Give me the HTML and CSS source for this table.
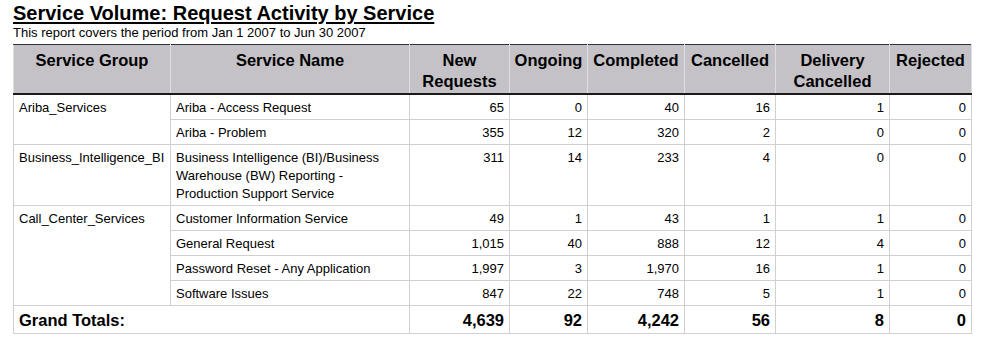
FILE: index.html
```html
<!DOCTYPE html>
<html lang="en">
<head>
<meta charset="utf-8">
<title>Service Volume: Request Activity by Service</title>
<link rel="stylesheet" href="styles.css">
</head>
<body>
<h1 class="title">Service Volume: Request Activity by Service</h1>
<p class="subtitle">This report covers the period from Jan 1 2007 to Jun 30 2007</p>
<table class="report">
  <colgroup>
    <col class="c-group">
    <col class="c-name">
    <col class="c-new">
    <col class="c-ongoing">
    <col class="c-completed">
    <col class="c-cancelled">
    <col class="c-delivery">
    <col class="c-rejected">
  </colgroup>
  <thead>
    <tr>
      <th>Service Group</th>
      <th>Service Name</th>
      <th>New<br>Requests</th>
      <th>Ongoing</th>
      <th>Completed</th>
      <th>Cancelled</th>
      <th>Delivery<br>Cancelled</th>
      <th>Rejected</th>
    </tr>
  </thead>
  <tbody>
    <tr>
      <td class="group" rowspan="2">Ariba_Services</td>
      <td>Ariba - Access Request</td>
      <td class="num">65</td><td class="num">0</td><td class="num">40</td><td class="num">16</td><td class="num">1</td><td class="num">0</td>
    </tr>
    <tr>
      <td>Ariba - Problem</td>
      <td class="num">355</td><td class="num">12</td><td class="num">320</td><td class="num">2</td><td class="num">0</td><td class="num">0</td>
    </tr>
    <tr>
      <td class="group">Business_Intelligence_BI</td>
      <td>Business Intelligence (BI)/Business Warehouse (BW) Reporting - Production Support Service</td>
      <td class="num">311</td><td class="num">14</td><td class="num">233</td><td class="num">4</td><td class="num">0</td><td class="num">0</td>
    </tr>
    <tr>
      <td class="group" rowspan="4">Call_Center_Services</td>
      <td>Customer Information Service</td>
      <td class="num">49</td><td class="num">1</td><td class="num">43</td><td class="num">1</td><td class="num">1</td><td class="num">0</td>
    </tr>
    <tr>
      <td>General Request</td>
      <td class="num">1,015</td><td class="num">40</td><td class="num">888</td><td class="num">12</td><td class="num">4</td><td class="num">0</td>
    </tr>
    <tr>
      <td>Password Reset - Any Application</td>
      <td class="num">1,997</td><td class="num">3</td><td class="num">1,970</td><td class="num">16</td><td class="num">1</td><td class="num">0</td>
    </tr>
    <tr>
      <td>Software Issues</td>
      <td class="num">847</td><td class="num">22</td><td class="num">748</td><td class="num">5</td><td class="num">1</td><td class="num">0</td>
    </tr>
  </tbody>
  <tfoot>
    <tr class="totals">
      <td colspan="2">Grand Totals:</td>
      <td class="num">4,639</td><td class="num">92</td><td class="num">4,242</td><td class="num">56</td><td class="num">8</td><td class="num">0</td>
    </tr>
  </tfoot>
</table>
</body>
</html>
```
FILE: styles.css
```css
html, body {
  background: #ffffff;
}
body {
  margin: 0;
  padding: 0 0 0 13px;
  font-family: "Liberation Sans", Arial, sans-serif;
  color: #000;
}
.title {
  margin: 0;
  padding-top: 1px;
  font-size: 20px;
  line-height: 24px;
  font-weight: bold;
  text-decoration: underline;
  text-decoration-thickness: 2px;
  text-underline-offset: 2px;
}
.subtitle {
  margin: 0;
  font-size: 13px;
  line-height: 15px;
}
.report {
  margin-top: 4px;
  width: 959px;
  table-layout: fixed;
  border-collapse: collapse;
  border: 1px solid #d0d0d0;
}
.c-group { width: 157px; }
.c-name { width: 239px; }
.c-new { width: 100px; }
.c-ongoing { width: 78px; }
.c-completed { width: 97px; }
.c-cancelled { width: 91px; }
.c-delivery { width: 114px; }
.c-rejected { width: 82px; }

.report th {
  background: #c4c2c6;
  font-size: 16.5px;
  line-height: 21px;
  font-weight: bold;
  text-align: center;
  vertical-align: top;
  padding: 5px 2px 1px;
  border-top: 1px solid #333;
  border-bottom: 2px solid #1a1a1a;
  border-left: 1px solid #dedede;
  border-right: 1px solid #dedede;
  white-space: nowrap;
}
.report td {
  font-size: 13px;
  line-height: 18px;
  vertical-align: top;
  padding: 4px 5px 2px 5px;
  border: 1px solid #d0d0d0;
}
.report td.group {
  white-space: nowrap;
}
.report td.num {
  text-align: right;
  padding-right: 5px;
}
.report .totals td {
  font-size: 16.5px;
  line-height: 20px;
  font-weight: bold;
  padding-top: 4px;
  padding-bottom: 3px;
}
```
